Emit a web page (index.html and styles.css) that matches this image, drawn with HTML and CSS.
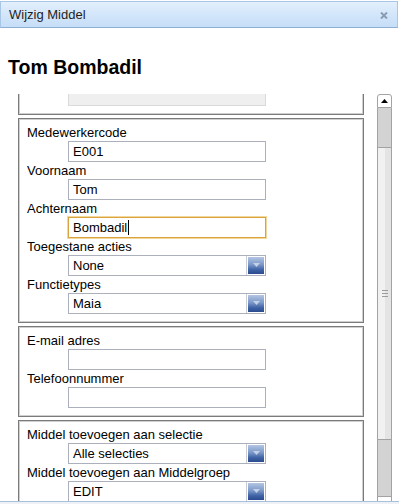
FILE: index.html
```html
<!DOCTYPE html>
<html lang="nl">
<head>
<meta charset="utf-8">
<title>Wijzig Middel</title>
<link rel="stylesheet" href="styles.css">
</head>
<body>
<div class="dialog">
  <div class="titlebar">
    <span class="title">Wijzig Middel</span>
    <svg class="close" width="8" height="7" viewBox="0 0 8 7"><path d="M1 0.5 L7 6.5 M7 0.5 L1 6.5" stroke="#8a9cb3" stroke-width="2"/></svg>
  </div>
  <h1 class="name">Tom Bombadil</h1>
  <div class="main">
    <div class="viewport">
      <div class="content">
        <div class="group">
          <div class="spacer"></div>
          <div class="field disabled"></div>
        </div>
        <div class="group">
          <div class="label">Medewerkercode</div>
          <div class="field">E001</div>
          <div class="label">Voornaam</div>
          <div class="field">Tom</div>
          <div class="label">Achternaam</div>
          <div class="field focus">Bombadil<span class="caret"></span></div>
          <div class="label">Toegestane acties</div>
          <div class="field select"><span class="val">None</span><span class="btn"><span class="btn-in"><svg width="7" height="4" viewBox="0 0 7 4"><path d="M0 0 H7 L3.5 4 Z" fill="#c3d1e8"/></svg></span></span></div>
          <div class="label">Functietypes</div>
          <div class="field select"><span class="val">Maia</span><span class="btn"><span class="btn-in"><svg width="7" height="4" viewBox="0 0 7 4"><path d="M0 0 H7 L3.5 4 Z" fill="#c3d1e8"/></svg></span></span></div>
        </div>
        <div class="group">
          <div class="label">E-mail adres</div>
          <div class="field"></div>
          <div class="label">Telefoonnummer</div>
          <div class="field"></div>
        </div>
        <div class="group">
          <div class="label">Middel toevoegen aan selectie</div>
          <div class="field select"><span class="val">Alle selecties</span><span class="btn"><span class="btn-in"><svg width="7" height="4" viewBox="0 0 7 4"><path d="M0 0 H7 L3.5 4 Z" fill="#c3d1e8"/></svg></span></span></div>
          <div class="label">Middel toevoegen aan Middelgroep</div>
          <div class="field select"><span class="val">EDIT</span><span class="btn"><span class="btn-in"><svg width="7" height="4" viewBox="0 0 7 4"><path d="M0 0 H7 L3.5 4 Z" fill="#c3d1e8"/></svg></span></span></div>
        </div>
      </div>
    </div>
    <div class="scrollbar">
      <div class="sb-up"><svg width="7" height="4" viewBox="0 0 7 4"><path d="M0 4 H7 L3.5 0 Z" fill="#000"/></svg></div>
      <div class="sb-track top"></div>
      <div class="sb-thumb"><svg width="6" height="7" viewBox="0 0 6 7"><path d="M0 0.5 H6 M0 3.5 H6 M0 6.5 H6" stroke="#9c9c9c" stroke-width="1"/></svg></div>
      <div class="sb-track bottom"></div>
      <div class="sb-down"></div>
    </div>
  </div>
  <div class="footer"></div>
</div>
</body>
</html>
```
FILE: styles.css
```css
html, body {
  margin: 0;
  padding: 0;
  background: #fff;
}
body {
  width: 399px;
  height: 504px;
  overflow: hidden;
  font-family: "Liberation Sans", Arial, sans-serif;
  font-size: 13px;
  color: #000;
}
.dialog {
  padding-top: 1px;
}
.titlebar {
  box-sizing: border-box;
  height: 27px;
  margin-right: 1px;
  border: 1px solid #a9c6e6;
  border-bottom-color: #8eaed3;
  background: linear-gradient(to bottom, #e3effc 0%, #d3e6fa 50%, #c6def7 100%);
  display: flex;
  align-items: center;
  justify-content: space-between;
  padding: 0 9px 0 8px;
}
.title {
  color: #1e1e1e;
  font-size: 13px;
  line-height: 16px;
}
.close {
  display: block;
  margin-top: 1px;
}
.name {
  margin: 28px 0 16px;
  padding-left: 8px;
  font-size: 19.5px;
  line-height: 22px;
  font-weight: bold;
  color: #000;
}
.main {
  display: flex;
  height: 407px;
  padding-left: 18px;
}
.viewport {
  width: 346px;
  height: 407px;
  overflow: hidden;
}
.content {
  margin-top: -32px;
}
.group {
  box-sizing: border-box;
  width: 346px;
  border: 1px solid #7b7b7b;
  box-shadow: inset 0 0 0 1px #cfcfcf;
  padding: 6px 7px 7px 8px;
  margin-bottom: 3px;
}
.spacer {
  height: 16px;
}
.label {
  height: 16px;
  line-height: 16px;
  white-space: nowrap;
}
.field {
  box-sizing: border-box;
  width: 198px;
  height: 21px;
  margin: 0 0 1px 41px;
  border: 1px solid #abb0bc;
  background: #fff;
  padding: 0 4px;
  line-height: 19px;
  display: flex;
  align-items: center;
  white-space: nowrap;
}
.field.disabled {
  background: #efefef;
  border-color: #dadada;
}
.field.focus {
  border-color: #d9a440;
  box-shadow: 0 0 0 1px #f3d89c;
}
.caret {
  display: inline-block;
  width: 1px;
  height: 15px;
  background: #000;
  margin-left: 1px;
}
.field.select {
  padding-right: 0;
}
.val {
  flex: 1;
}
.btn {
  align-self: stretch;
  display: flex;
  border-left: 1px solid #c9ccd4;
  padding: 1px;
}
.btn-in {
  width: 16px;
  display: flex;
  justify-content: center;
  align-items: flex-start;
  padding-top: 6px;
  box-sizing: border-box;
  background: linear-gradient(to bottom, #b3c5e3 0%, #7b98c8 45%, #3f62a6 75%, #2a4b8e 100%);
}
.btn-in svg {
  display: block;
}
.scrollbar {
  width: 15px;
  height: 407px;
  margin-left: 13px;
  overflow: hidden;
  display: flex;
  flex-direction: column;
  flex-shrink: 0;
}
.sb-up {
  box-sizing: border-box;
  height: 14px;
  border: 1px solid #a3a3a3;
  border-radius: 3px 3px 0 0;
  background: #fff;
  display: flex;
  align-items: center;
  justify-content: center;
  flex-shrink: 0;
}
.sb-up svg {
  display: block;
}
.sb-track {
  box-sizing: border-box;
  background: #d3d3d3;
  border-left: 1px solid #a3a3a3;
  border-right: 1px solid #a3a3a3;
  flex-shrink: 0;
}
.sb-track.top {
  height: 39px;
}
.sb-track.bottom {
  height: 56px;
}
.sb-thumb {
  box-sizing: border-box;
  height: 293px;
  border: 1px solid #a3a3a3;
  background: linear-gradient(to right, #f1f1f1 0, #f1f1f1 7px, #e4e4e4 7px, #e4e4e4 100%);
  display: flex;
  align-items: center;
  justify-content: center;
  flex-shrink: 0;
}
.sb-thumb svg {
  display: block;
  margin-left: 1px;
}
.sb-down {
  box-sizing: border-box;
  height: 14px;
  border: 1px solid #a3a3a3;
  background: #fff;
  flex-shrink: 0;
}
.footer {
  height: 20px;
  border-top: 1px solid #a9c0da;
  background: #eef2f7;
}
```
